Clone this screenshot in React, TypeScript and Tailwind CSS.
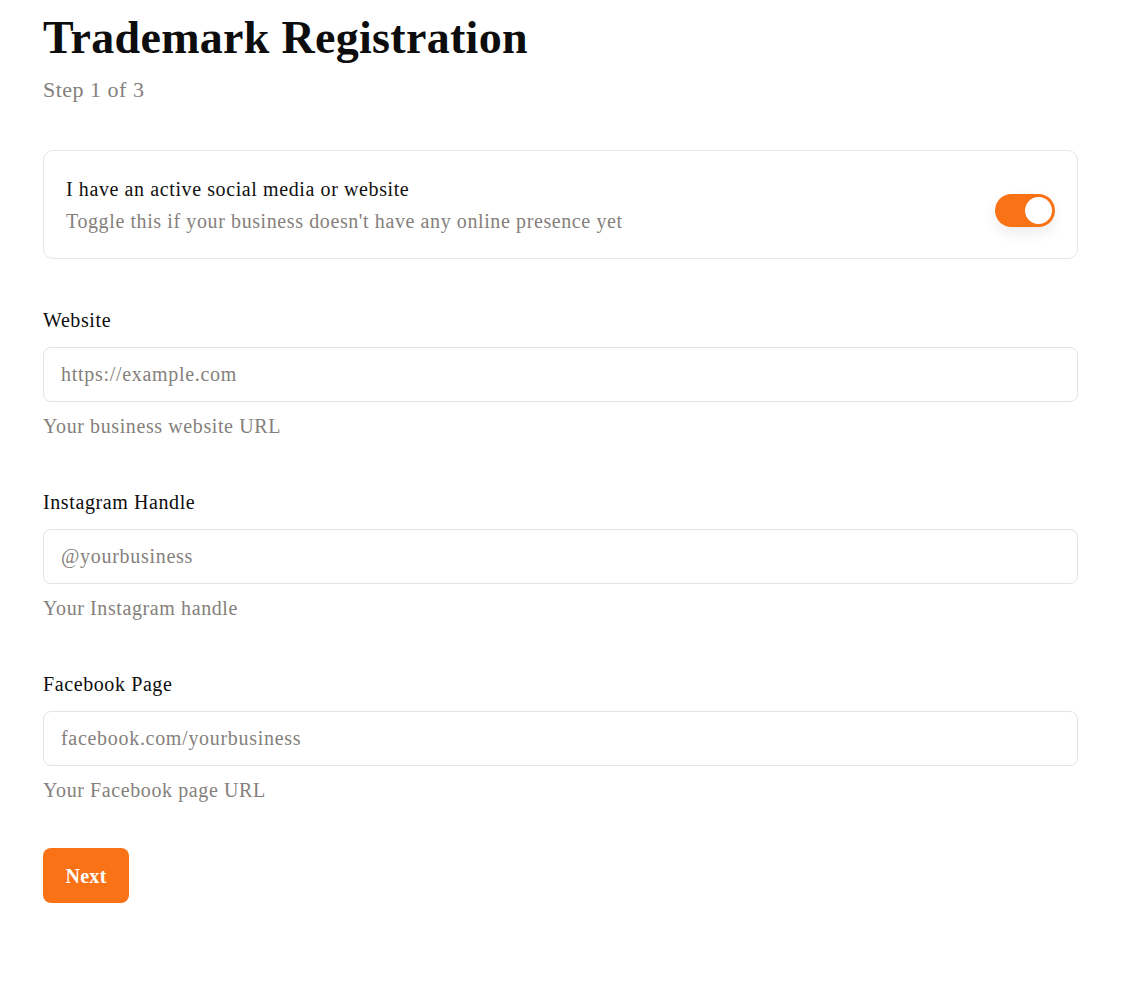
import { useState } from 'react';

const serif = "font-['Liberation_Serif','DejaVu_Serif',serif]";

function Field({ label, placeholder, help }: { label: string; placeholder: string; help: string }) {
  return (
    <div className="flex flex-col">
      <label className="text-[20px] tracking-[0.6px] leading-[24px] text-[#0d0d0d] mb-[15px]">{label}</label>
      <input
        placeholder={placeholder}
        className="h-[55px] w-full rounded-[8px] border border-[#e4e4e4] px-[17px] text-[20px] tracking-[0.7px] text-[#222] placeholder:text-[#85807c] outline-none"
      />
      <p className="mt-[12px] text-[20px] tracking-[0.6px] leading-[24px] text-[#85807c]">{help}</p>
    </div>
  );
}

export default function App() {
  const [on, setOn] = useState(true);

  return (
    <div className={`min-h-screen bg-white ${serif}`}>
      <div className="px-[43px] pt-[12px] pb-[80px]">
        {/* Header */}
        <h1 className="text-[46px] font-bold leading-[52px] tracking-[0.3px] text-[#0d0d0d]">Trademark Registration</h1>
        <p className="mt-[13px] text-[22px] leading-[26px] tracking-[0.5px] text-[#85807c]">Step 1 of 3</p>

        {/* Online presence toggle */}
        <div className="mt-[47px] flex h-[109px] items-center justify-between rounded-[10px] border border-[#e6e6e6] pl-[22px] pr-[22px]">
          <div className="flex flex-col">
            <span className="text-[20px] leading-[24px] tracking-[0.6px] text-[#111]">I have an active social media or website</span>
            <span className="mt-[8px] text-[20px] leading-[24px] tracking-[0.6px] text-[#85807c]">
              Toggle this if your business doesn't have any online presence yet
            </span>
          </div>
          <button
            onClick={() => setOn(!on)}
            className={`relative mt-[12px] h-[33px] w-[60px] rounded-full shadow-[0_6px_14px_rgba(0,0,0,0.08)] ${on ? 'bg-[#f97316]' : 'bg-gray-300'}`}
          >
            <span
              className={`absolute top-[3px] h-[27px] w-[27px] rounded-full bg-white ${on ? 'left-[30px]' : 'left-[3px]'}`}
            />
          </button>
        </div>

        {/* Fields */}
        <div className="mt-[49px] flex flex-col gap-[52px]">
          <Field label="Website" placeholder="https://example.com" help="Your business website URL" />
          <Field label="Instagram Handle" placeholder="@yourbusiness" help="Your Instagram handle" />
          <Field label="Facebook Page" placeholder="facebook.com/yourbusiness" help="Your Facebook page URL" />
        </div>

        <button className="mt-[46px] h-[55px] w-[86px] rounded-[8px] bg-[#f97316] text-[20px] font-bold tracking-[0.3px] text-white">
          Next
        </button>
      </div>
    </div>
  );
}
